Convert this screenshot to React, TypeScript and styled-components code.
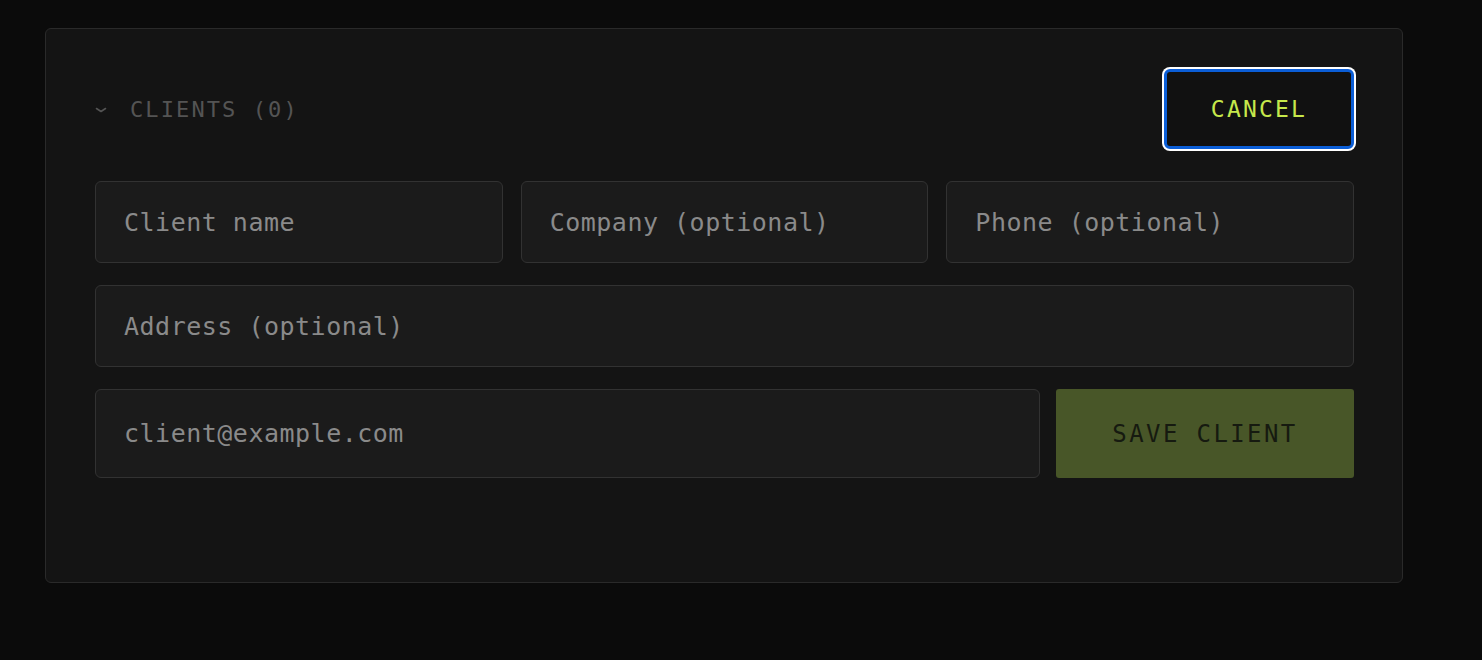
import React from "react";
import styled, { createGlobalStyle } from "styled-components";

const GlobalStyle = createGlobalStyle`
  html, body {
    margin: 0;
    padding: 0;
    background: #0b0b0b;
    font-family: "DejaVu Sans Mono", "Liberation Mono", monospace;
  }
  * { box-sizing: border-box; }
`;

const Page = styled.div`
  min-height: 660px;
  padding: 28px 0 0 45px;
  background: #0b0b0b;
`;

const Card = styled.section`
  width: 1358px;
  background: #141414;
  border: 1px solid #2a2a2a;
  border-radius: 6px;
  padding: 39px 48px 104px 49px;
  display: flex;
  flex-direction: column;
`;

const Header = styled.div`
  height: 82px;
  display: flex;
  align-items: center;
  justify-content: space-between;
  margin-bottom: 31px;
`;

const Toggle = styled.button`
  display: flex;
  align-items: center;
  gap: 23px;
  background: none;
  border: none;
  padding: 0;
  color: #545454;
  font-family: inherit;
  font-size: 22px;
  letter-spacing: 2.1px;
  cursor: pointer;
`;

const Chevron = styled.svg`
  width: 12px;
  height: 8px;
  margin-top: 2px;
`;

const CancelButton = styled.button`
  width: 190px;
  height: 80px;
  background: #111111;
  border: 3px solid #0b5ed7;
  border-radius: 6px;
  box-shadow: 0 0 0 2px #ffffff;
  color: #c6e84b;
  font-family: inherit;
  font-size: 23px;
  letter-spacing: 2.2px;
  display: flex;
  align-items: center;
  justify-content: center;
  cursor: pointer;
`;

const Row = styled.div<{ $cols: string; $gap: number; $height: number }>`
  display: grid;
  grid-template-columns: ${(p) => p.$cols};
  column-gap: ${(p) => p.$gap}px;
  height: ${(p) => p.$height}px;
  & + & {
    margin-top: 22px;
  }
`;

const Field = styled.input`
  width: 100%;
  height: 100%;
  background: #1b1b1b;
  border: 1px solid #323232;
  border-radius: 6px;
  padding: 0 0 0 28px;
  color: #d0d0d0;
  font-family: inherit;
  font-size: 25px;
  letter-spacing: 0.5px;
  outline: none;
  &::placeholder {
    color: #8a8a8a;
  }
`;

const SaveButton = styled.button`
  height: 100%;
  background: #485628;
  border: none;
  border-radius: 3px;
  color: #161a10;
  font-family: inherit;
  font-size: 24px;
  letter-spacing: 2.4px;
  cursor: not-allowed;
`;

export default function App() {
  return (
    <>
      <GlobalStyle />
      <Page>
        <Card>
          <Header>
            <Toggle type="button">
              <Chevron viewBox="0 0 12 8" fill="none">
                <path
                  d="M1.5 2.5 L6 5.5 L10.5 2.5"
                  stroke="#545454"
                  strokeWidth="1.6"
                  strokeLinecap="round"
                  strokeLinejoin="round"
                />
              </Chevron>
              CLIENTS (0)
            </Toggle>
            <CancelButton type="button">CANCEL</CancelButton>
          </Header>
          <Row $cols="1fr 1fr 1fr" $gap={18} $height={82}>
            <Field placeholder="Client name" />
            <Field placeholder="Company (optional)" />
            <Field placeholder="Phone (optional)" />
          </Row>
          <Row $cols="1fr" $gap={0} $height={82}>
            <Field placeholder="Address (optional)" />
          </Row>
          <Row $cols="1fr 298px" $gap={16} $height={89}>
            <Field placeholder="client@example.com" type="email" />
            <SaveButton type="button" disabled>
              SAVE CLIENT
            </SaveButton>
          </Row>
        </Card>
      </Page>
    </>
  );
}
